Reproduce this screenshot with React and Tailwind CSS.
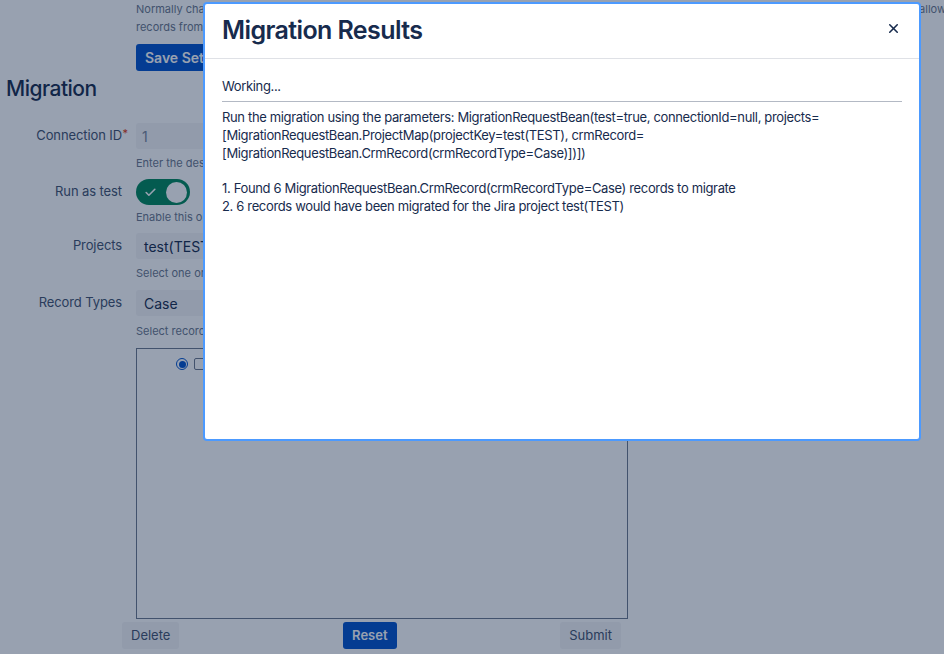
import { X, Check } from "lucide-react";

const labelCls = "relative text-right text-[13px] tracking-[-0.1px] text-[#42526e]";
const helpCls = "text-[11px] text-[#6b778c] whitespace-nowrap overflow-hidden";

function Row({ label, required, children, help, helpH }) {
  return (
    <div className="flex">
      <div className="flex w-[122px] shrink-0 h-[26px] items-center justify-end">
        <span className={labelCls}>
          {label}
          {required && <span className="absolute -right-[6px] -top-[1px] text-[#de350b] text-[11px]">*</span>}
        </span>
      </div>
      <div className="ml-[14px] flex-1 min-w-0">
        {children}
        <div className={helpCls + " " + helpH}>{help}</div>
      </div>
    </div>
  );
}

export default function App() {
  return (
    <div
      className="relative w-[944px] h-[654px] overflow-hidden bg-white text-[#172b4d]"
      style={{ fontFamily: "Inter, 'Liberation Sans', sans-serif" }}
    >
      {/* page underneath */}
      <div className="pl-[136px] text-[11px] text-[#6b778c] leading-[18px]">
        <div className="flex justify-between whitespace-nowrap">
          <span>Normally changes made in Jira are synchronized</span>
          <span className="-mr-[2px]">allow</span>
        </div>
        <div className="whitespace-nowrap">records from Jira</div>
      </div>
      <div className="pl-[136px] mt-[8px]">
        <button className="h-[27px] px-[9px] rounded-[3px] bg-[#0052cc] text-white text-[14px] font-semibold">
          Save Settings
        </button>
      </div>
      <h2 className="pl-[6px] mt-[4px] text-[21px] tracking-[-0.5px] leading-[28px] font-medium text-[#172b4d]">Migration</h2>

      <div className="mt-[20px] w-[628px]">
        <Row label="Connection ID" required help="Enter the desired" helpH="h-[30px] pt-[6px]">
          <div className="h-[26px] w-[300px] rounded-[3px] bg-[#f4f5f7] px-[6px] flex items-center text-[14px] text-[#7a869a]">1</div>
        </Row>
        <Row label="Run as test" help="Enable this option" helpH="h-[28px] pt-[4px]">
          <div className="h-[26px] w-[54px] rounded-full bg-[#00875a] flex items-center justify-between pl-[8px] pr-[3px]">
            <Check size={13} strokeWidth={3} className="text-white" />
            <div className="h-[21px] w-[21px] rounded-full bg-white" />
          </div>
        </Row>
        <Row label="Projects" help="Select one or" helpH="h-[31px] pt-[6px]">
          <div className="h-[26px] w-[300px] rounded-[3px] bg-[#f4f5f7] px-[8px] flex items-center text-[14px]">test(TEST)</div>
        </Row>
        <Row label="Record Types" help="Select record" helpH="h-[32px] pt-[7px]">
          <div className="h-[26px] w-[300px] rounded-[3px] bg-[#f4f5f7] px-[8px] flex items-center text-[14px]">Case</div>
        </Row>
        <div className="ml-[136px] h-[271px] border border-[#6b778c] pt-[9px] pl-[39px] flex gap-[6px]">
          <div className="h-[12px] w-[12px] rounded-full border border-[#0052cc] flex items-center justify-center">
            <div className="h-[7px] w-[7px] rounded-full bg-[#0052cc]" />
          </div>
          <div className="h-[12px] w-[12px] rounded-[2px] border border-[#6b778c]" />
        </div>
      </div>
      <div className="flex w-[499px] ml-[122px] mt-[3px] justify-between items-center">
        <button className="h-[27px] px-[9px] rounded-[3px] bg-[#f4f5f7] text-[13px] text-[#42526e]">Delete</button>
        <button className="h-[27px] px-[9px] rounded-[3px] bg-[#0052cc] text-[13px] text-white font-semibold">Reset</button>
        <button className="h-[27px] px-[9px] rounded-[3px] bg-[#f4f5f7] text-[13px] text-[#42526e]">Submit</button>
      </div>

      {/* blanket */}
      <div className="absolute inset-0 bg-[rgba(9,30,66,0.42)]" />

      {/* dialog */}
      <div className="absolute left-[203px] top-[2px] w-[718px] h-[439px] bg-white border-2 border-[#4c9aff] rounded-[4px] flex flex-col">
        <div className="h-[55px] shrink-0 border-b border-[#dfe1e6] flex items-center justify-between pl-[17px] pr-[18px]">
          <h1 className="text-[25px] font-semibold tracking-[-0.6px] text-[#172b4d]">Migration Results</h1>
          <X size={15} strokeWidth={2.5} className="text-[#172b4d] -mt-[5px]" />
        </div>
        <div className="px-[17px] pt-[18px] text-[13px] tracking-[-0.35px] leading-[18px] text-[#172b4d]">
          <div>Working...</div>
          <div className="mt-[6px] border-t border-[#b3b9c4]" />
          <div className="mt-[6px]">
            Run the migration using the parameters: MigrationRequestBean(test=true, connectionId=null, projects=
            <br />
            [MigrationRequestBean.ProjectMap(projectKey=test(TEST), crmRecord=
            <br />
            [MigrationRequestBean.CrmRecord(crmRecordType=Case)])])
          </div>
          <div className="mt-[17px]">
            1. Found 6 MigrationRequestBean.CrmRecord(crmRecordType=Case) records to migrate
          </div>
          <div>2. 6 records would have been migrated for the Jira project test(TEST)</div>
        </div>
      </div>
    </div>
  );
}
